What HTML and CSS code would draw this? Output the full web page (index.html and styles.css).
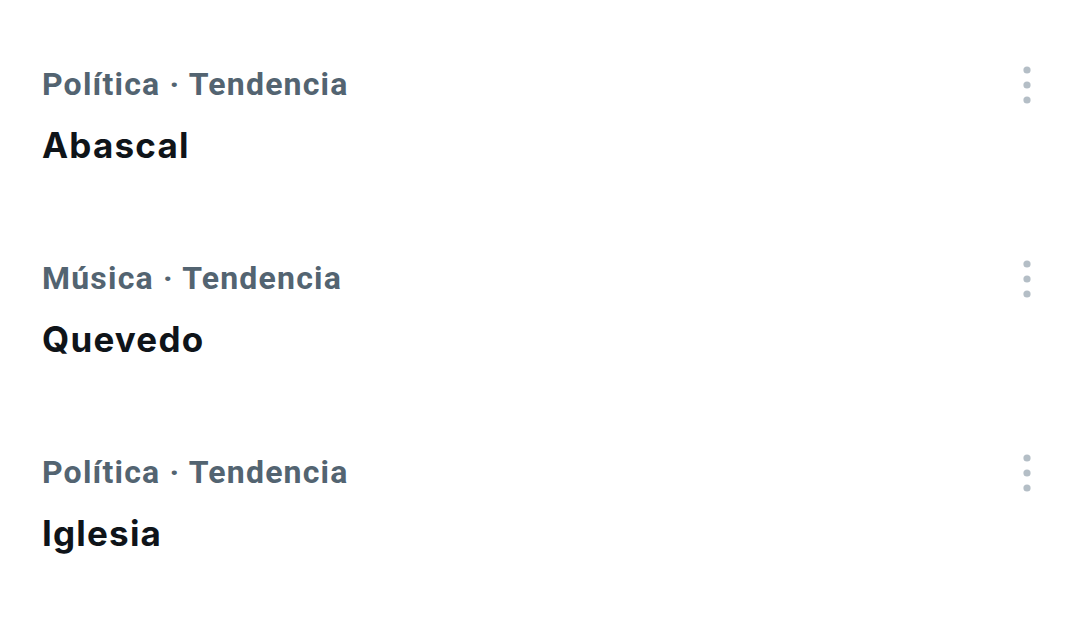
FILE: index.html
```html
<!DOCTYPE html>
<html lang="es">
<head>
    <meta charset="UTF-8">
    <meta name="viewport" content="width=device-width, initial-scale=1.0">
    <title>Tendencias</title>
    <link rel="stylesheet" href="styles.css">
</head>
<body>
<ul class="trends">
    <li class="trend">
        <div class="trend-text">
            <div class="trend-meta">Política · Tendencia</div>
            <div class="trend-name">Abascal</div>
        </div>
        <button class="trend-more" aria-label="Más opciones">
            <svg width="20" height="38" viewBox="0 0 20 38"><circle cx="10" cy="4" r="3.6"/><circle cx="10" cy="19" r="3.6"/><circle cx="10" cy="34" r="3.6"/></svg>
        </button>
    </li>
    <li class="trend">
        <div class="trend-text">
            <div class="trend-meta">Música · Tendencia</div>
            <div class="trend-name">Quevedo</div>
        </div>
        <button class="trend-more" aria-label="Más opciones">
            <svg width="20" height="38" viewBox="0 0 20 38"><circle cx="10" cy="4" r="3.6"/><circle cx="10" cy="19" r="3.6"/><circle cx="10" cy="34" r="3.6"/></svg>
        </button>
    </li>
    <li class="trend">
        <div class="trend-text">
            <div class="trend-meta">Política · Tendencia</div>
            <div class="trend-name">Iglesia</div>
        </div>
        <button class="trend-more" aria-label="Más opciones">
            <svg width="20" height="38" viewBox="0 0 20 38"><circle cx="10" cy="4" r="3.6"/><circle cx="10" cy="19" r="3.6"/><circle cx="10" cy="34" r="3.6"/></svg>
        </button>
    </li>
</ul>
</body>
</html>
```

FILE: styles.css
```css
body {
    margin: 0;
    background-color: #fff;
    font-family: Roboto, "Noto Sans", sans-serif;
}
.trends {
    list-style: none;
    margin: 0;
    padding: 64px 43px 0 42px;
    display: flex;
    flex-direction: column;
    gap: 91px;
}
.trend {
    display: flex;
    justify-content: space-between;
    align-items: flex-start;
}
.trend-meta {
    font-size: 32px;
    line-height: 40px;
    font-weight: 700;
    letter-spacing: 1.2px;
    color: #536471;
}
.trend-name {
    margin-top: 19px;
    font-family: Inter, Roboto, sans-serif;
    font-size: 35px;
    line-height: 44px;
    font-weight: 700;
    letter-spacing: 1.2px;
    color: #0f1419;
}
.trend-more {
    margin-top: 2px;
    padding: 0;
    border: none;
    background: none;
    cursor: pointer;
}
.trend-more svg {
    display: block;
    fill: #b4bec6;
}
```
